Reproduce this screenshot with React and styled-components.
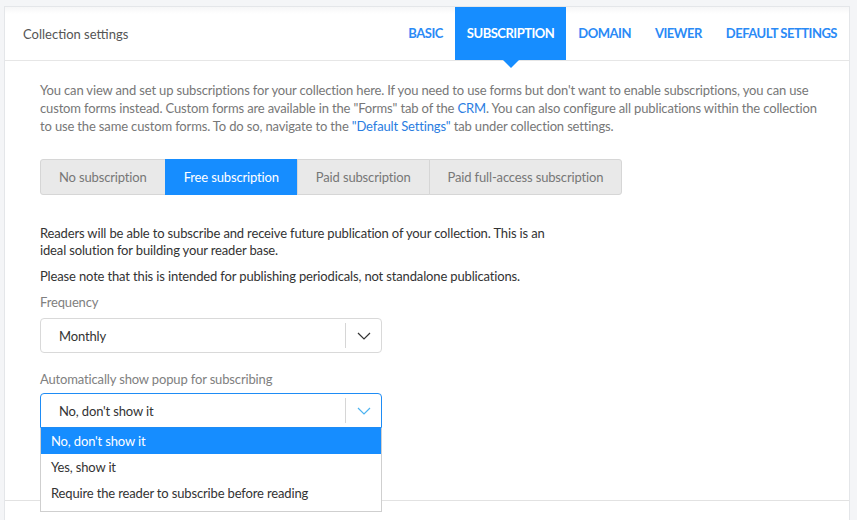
import React from "react";
import styled, { createGlobalStyle } from "styled-components";

const Global = createGlobalStyle`
  html, body { margin: 0; padding: 0; }
  body {
    background: #f4f5f7;
    font-family: Lato, "Liberation Sans", sans-serif;
    font-size: 13px;
    color: #333;
  }
`;

const Page = styled.div`
  padding: 6px 7px 0 4px;
  height: 520px;
  box-sizing: border-box;
  overflow: hidden;
`;

const Card = styled.div`
  background: #fff;
  border: 1px solid #e4e6e9;
  border-bottom: none;
  height: 540px;
  display: flex;
  flex-direction: column;
`;

const Header = styled.div`
  height: 53px;
  flex: none;
  border-bottom: 1px solid #e6e6e6;
  display: flex;
  align-items: stretch;
  justify-content: space-between;
  background: linear-gradient(#f6f6f7 0px, #fff 7px);
`;

const Title = styled.div`
  display: flex;
  align-items: center;
  padding-left: 18px;
  color: #555;
  font-size: 13px;
`;

const Tabs = styled.div`
  display: flex;
  align-items: stretch;
`;

const Tab = styled.div`
  position: relative;
  display: flex;
  align-items: center;
  padding: 0 12px 1px;
  font-size: 13px;
  font-weight: 700;
  letter-spacing: -0.5px;
  text-transform: uppercase;
  color: ${(p) => (p.$active ? "#fff" : "#2a8af6")};
  background: ${(p) => (p.$active ? "#168dff" : "transparent")};
  &::after {
    content: "";
    display: ${(p) => (p.$active ? "block" : "none")};
    position: absolute;
    left: 50%;
    bottom: -8px;
    margin-left: -8px;
    border-left: 8px solid transparent;
    border-right: 8px solid transparent;
    border-top: 8px solid #168dff;
  }
`;

const Body = styled.div`
  padding: 20px 20px 0 35px;
  height: 440px;
  box-sizing: border-box;
  flex: none;
  border-bottom: 1px solid #e2e2e2;
  letter-spacing: -0.15px;
`;

const Intro = styled.p`
  margin: 0;
  color: #777;
  line-height: 18px;
  white-space: nowrap;
`;

const Link = styled.a`
  color: #2a7de1;
  text-decoration: none;
`;

const ButtonGroup = styled.div`
  display: flex;
  margin-top: 24px;
`;

const SegButton = styled.div`
  height: 36px;
  box-sizing: border-box;
  display: flex;
  align-items: center;
  padding: 0 18px;
  border: 1px solid ${(p) => (p.$active ? "#168dff" : "#d6d6d6")};
  margin-left: -1px;
  background: ${(p) => (p.$active ? "#168dff" : "#e9e9e9")};
  color: ${(p) => (p.$active ? "#fff" : "#777")};
  &:first-child {
    margin-left: 0;
    border-radius: 3px 0 0 3px;
  }
  &:last-child {
    border-radius: 0 3px 3px 0;
  }
`;

const Description = styled.p`
  margin: ${(p) => p.$mt || "0"} 0 0 0;
  color: #333;
  line-height: 17px;
  white-space: nowrap;
`;

const Label = styled.div`
  margin-top: ${(p) => p.$mt || "0"};
  color: #808080;
  line-height: 17px;
`;

const Field = styled.div`
  position: relative;
  width: 342px;
  margin-top: ${(p) => p.$mt || "7px"};
`;

const SelectBox = styled.div`
  height: 35px;
  box-sizing: border-box;
  border: 1px solid ${(p) => (p.$open ? "#1e8cf5" : "#d9d9d9")};
  border-radius: ${(p) => (p.$open ? "4px 4px 0 0" : "4px")};
  display: flex;
  align-items: center;
  color: #333;
`;

const SelectValue = styled.div`
  flex: 1;
  padding-left: 18px;
`;

const Divider = styled.div`
  width: 1px;
  align-self: stretch;
  margin: 4px 0;
  background: #d6d6d6;
`;

const Arrow = styled.div`
  width: 35px;
  display: flex;
  align-items: center;
  justify-content: center;
`;

const Menu = styled.div`
  position: absolute;
  left: 0;
  right: 0;
  top: 35px;
  background: #fff;
  border: 1px solid #cfcfcf;
  border-top: none;
  padding-bottom: 5px;
  z-index: 5;
`;

const Option = styled.div`
  height: 26px;
  display: flex;
  align-items: center;
  padding-left: 10px;
  background: ${(p) => (p.$selected ? "#168dff" : "#fff")};
  color: ${(p) => (p.$selected ? "#fff" : "#333")};
`;

const Chevron = ({ color }) => (
  <svg width="14" height="8" viewBox="0 0 14 8">
    <path d="M1 1 L7 7 L13 1" fill="none" stroke={color} strokeWidth="1.2" />
  </svg>
);

export default function App() {
  return (
    <>
      <Global />
      <Page>
        <Card>
          <Header>
            <Title>Collection settings</Title>
            <Tabs>
              <Tab>Basic</Tab>
              <Tab $active>Subscription</Tab>
              <Tab>Domain</Tab>
              <Tab>Viewer</Tab>
              <Tab>Default settings</Tab>
            </Tabs>
          </Header>
          <Body>
            <Intro>
              You can view and set up subscriptions for your collection here. If you need to use forms but don't want to enable subscriptions, you can use
              <br />
              custom forms instead. Custom forms are available in the "Forms" tab of the <Link>CRM</Link>. You can also configure all publications within the collection
              <br />
              to use the same custom forms. To do so, navigate to the <Link>"Default Settings"</Link> tab under collection settings.
            </Intro>
            <ButtonGroup>
              <SegButton>No subscription</SegButton>
              <SegButton $active>Free subscription</SegButton>
              <SegButton>Paid subscription</SegButton>
              <SegButton>Paid full-access subscription</SegButton>
            </ButtonGroup>
            <Description $mt="30px">
              Readers will be able to subscribe and receive future publication of your collection. This is an
              <br />
              ideal solution for building your reader base.
            </Description>
            <Description $mt="9px">
              Please note that this is intended for publishing periodicals, not standalone publications.
            </Description>
            <Label $mt="9px">Frequency</Label>
            <Field>
              <SelectBox>
                <SelectValue>Monthly</SelectValue>
                <Divider />
                <Arrow>
                  <Chevron color="#333" />
                </Arrow>
              </SelectBox>
            </Field>
            <Label $mt="18px">Automatically show popup for subscribing</Label>
            <Field $mt="5px">
              <SelectBox $open>
                <SelectValue>No, don't show it</SelectValue>
                <Divider />
                <Arrow>
                  <Chevron color="#4db3f0" />
                </Arrow>
              </SelectBox>
              <Menu>
                <Option $selected>No, don't show it</Option>
                <Option>Yes, show it</Option>
                <Option>Require the reader to subscribe before reading</Option>
              </Menu>
            </Field>
          </Body>
        </Card>
      </Page>
    </>
  );
}
